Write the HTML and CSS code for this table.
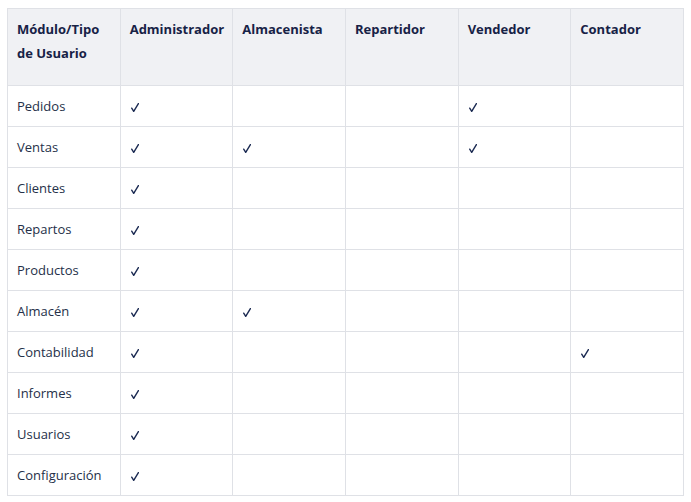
FILE: index.html
```html
<!DOCTYPE html>
<html lang="es">
<head>
<meta charset="utf-8">
<link rel="stylesheet" href="styles.css">
</head>
<body>
<div class="wrap">
<table class="perm">
<thead>
<tr><th>Módulo/Tipo de Usuario</th><th>Administrador</th><th>Almacenista</th><th>Repartidor</th><th>Vendedor</th><th>Contador</th></tr>
</thead>
<tbody>
<tr><td>Pedidos</td><td><svg class="ok" viewBox="0 0 8 9"><path d="M0.7 5.2 L2.7 8.3 L7.4 0.6"/></svg></td><td></td><td></td><td><svg class="ok" viewBox="0 0 8 9"><path d="M0.7 5.2 L2.7 8.3 L7.4 0.6"/></svg></td><td></td></tr>
<tr><td>Ventas</td><td><svg class="ok" viewBox="0 0 8 9"><path d="M0.7 5.2 L2.7 8.3 L7.4 0.6"/></svg></td><td><svg class="ok" viewBox="0 0 8 9"><path d="M0.7 5.2 L2.7 8.3 L7.4 0.6"/></svg></td><td></td><td><svg class="ok" viewBox="0 0 8 9"><path d="M0.7 5.2 L2.7 8.3 L7.4 0.6"/></svg></td><td></td></tr>
<tr><td>Clientes</td><td><svg class="ok" viewBox="0 0 8 9"><path d="M0.7 5.2 L2.7 8.3 L7.4 0.6"/></svg></td><td></td><td></td><td></td><td></td></tr>
<tr><td>Repartos</td><td><svg class="ok" viewBox="0 0 8 9"><path d="M0.7 5.2 L2.7 8.3 L7.4 0.6"/></svg></td><td></td><td></td><td></td><td></td></tr>
<tr><td>Productos</td><td><svg class="ok" viewBox="0 0 8 9"><path d="M0.7 5.2 L2.7 8.3 L7.4 0.6"/></svg></td><td></td><td></td><td></td><td></td></tr>
<tr><td>Almacén</td><td><svg class="ok" viewBox="0 0 8 9"><path d="M0.7 5.2 L2.7 8.3 L7.4 0.6"/></svg></td><td><svg class="ok" viewBox="0 0 8 9"><path d="M0.7 5.2 L2.7 8.3 L7.4 0.6"/></svg></td><td></td><td></td><td></td></tr>
<tr><td>Contabilidad</td><td><svg class="ok" viewBox="0 0 8 9"><path d="M0.7 5.2 L2.7 8.3 L7.4 0.6"/></svg></td><td></td><td></td><td></td><td><svg class="ok" viewBox="0 0 8 9"><path d="M0.7 5.2 L2.7 8.3 L7.4 0.6"/></svg></td></tr>
<tr><td>Informes</td><td><svg class="ok" viewBox="0 0 8 9"><path d="M0.7 5.2 L2.7 8.3 L7.4 0.6"/></svg></td><td></td><td></td><td></td><td></td></tr>
<tr><td>Usuarios</td><td><svg class="ok" viewBox="0 0 8 9"><path d="M0.7 5.2 L2.7 8.3 L7.4 0.6"/></svg></td><td></td><td></td><td></td><td></td></tr>
<tr><td>Configuración</td><td><svg class="ok" viewBox="0 0 8 9"><path d="M0.7 5.2 L2.7 8.3 L7.4 0.6"/></svg></td><td></td><td></td><td></td><td></td></tr>
</tbody>
</table>
</div>
</body>
</html>
```
FILE: styles.css
```css
html, body {
  margin: 0;
  padding: 0;
  background: #ffffff;
}
.wrap {
  padding: 8px 0 0 7px;
}
.perm {
  border-collapse: collapse;
  table-layout: fixed;
  width: 677px;
  font-family: "Open Sans", "Noto Sans", sans-serif;
  font-size: 13px;
  color: #253049;
}
.perm th, .perm td {
  border: 1px solid #dfe1e6;
  text-align: left;
  vertical-align: top;
  padding: 8px 9px;
  line-height: 24px;
}
.perm th {
  background: #f0f1f4;
  color: #172246;
  font-weight: 700;
  height: 48px;
  padding-bottom: 20px;
}
.perm td {
  height: 24px;
}
.ok {
  display: block;
  width: 8px;
  height: 9px;
  margin: 9px 0 0 1px;
  fill: none;
  stroke: #1b2a52;
  stroke-width: 1.4;
  stroke-linecap: round;
  stroke-linejoin: round;
}
```
